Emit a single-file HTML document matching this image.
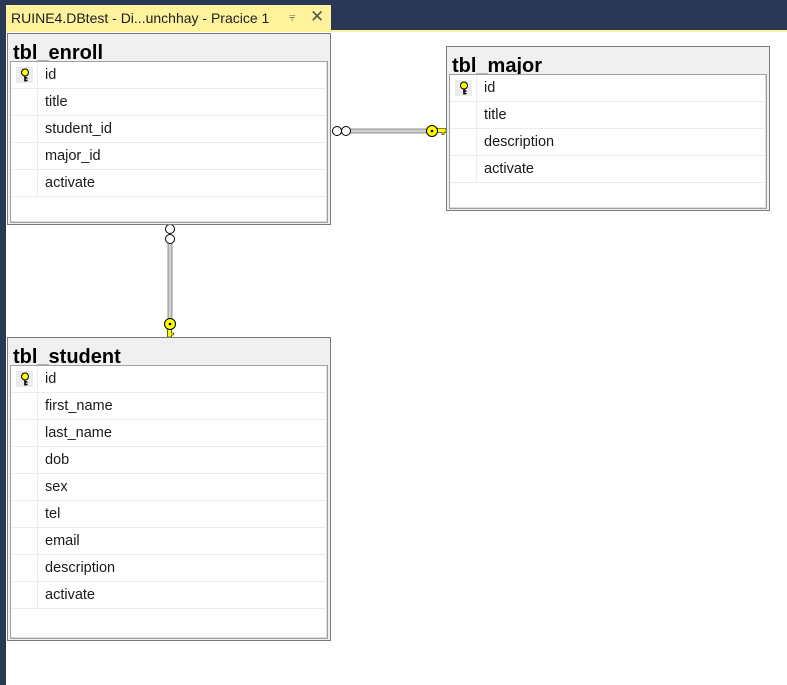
<!DOCTYPE html>
<html><head><meta charset="utf-8"><style>
*{margin:0;padding:0;box-sizing:border-box}
body{width:787px;height:685px;position:relative;background:#fff;overflow:hidden;font-family:"Segoe UI","Liberation Sans","DejaVu Sans",sans-serif}
.top{position:absolute;left:0;top:0;width:787px;height:30px;background:#293955}
.yl{position:absolute;left:0;top:30px;width:787px;height:2px;background:#fdf1a6}
.left{position:absolute;left:0;top:0;width:6px;height:685px;background:#293955}
.tab{position:absolute;left:6px;top:5px;width:325px;height:27px;background:#fff29d;font-size:14px;color:#1e1e1e;padding:5px 0 0 5px;white-space:nowrap}
.tab .pin{position:absolute;left:283px;top:5px;font-size:12px;color:#555}
.tab .x{position:absolute;left:304px;top:2px;font-size:17px;color:#555}
.tbl{position:absolute;border:1px solid #7a7a7a;background:#f0f0f0;overflow:hidden}
.tbl h1{position:absolute;left:5px;top:7px;font-size:20px;font-weight:bold;color:#000;line-height:24px;white-space:nowrap;z-index:0}
.in{position:absolute;left:2px;border:1px solid #a0a0a0;background:#fff;box-shadow:inset -1px -1px 0 #ddd;z-index:1}
.row{height:27px;border-bottom:1px solid #ececec;position:relative;font-size:14.5px;color:#1a1a1a;line-height:27px;padding-left:34px}
.row:before{content:"";position:absolute;left:26px;top:0;bottom:0;border-left:1px solid #ececec}
.k{position:absolute;left:5px;top:5px;width:17px;height:16px;background:#ececec}
</style></head><body>
<div class="top"></div><div class="yl"></div><div class="left"></div>
<div class="tab">RUINE4.DBtest - Di...unchhay - Pracice 1<span class="pin">&#x2AE7;</span><span class="x">✕</span></div>

<svg width="787" height="685" style="position:absolute;left:0;top:0" xmlns="http://www.w3.org/2000/svg">
<rect x="350" y="129" width="80" height="4" fill="#d0d0d0" stroke="#777" stroke-width="0.8"/>
<circle cx="337" cy="131" r="4.5" fill="#fff" stroke="#000"/>
<circle cx="346" cy="131" r="4.5" fill="#fff" stroke="#000"/>
<path d="M436 128.5h10v4h-2v2h-2v-2h-6z" fill="#ffff00" stroke="#000" stroke-width="0.6"/>
<circle cx="432" cy="131" r="5.5" fill="#ffff00" stroke="#000"/><circle cx="432" cy="131" r="1.3" fill="#000"/>
<rect x="168" y="243" width="4" height="78" fill="#d0d0d0" stroke="#777" stroke-width="0.8"/>
<circle cx="170" cy="229" r="4.5" fill="#fff" stroke="#000"/>
<circle cx="170" cy="239" r="4.5" fill="#fff" stroke="#000"/>
<path d="M167.5 327v10h4v-2h2v-2h-2v-6z" fill="#ffff00" stroke="#000" stroke-width="0.6"/>
<circle cx="170" cy="324" r="5.5" fill="#ffff00" stroke="#000"/><circle cx="170" cy="324" r="1.3" fill="#000"/>
</svg>

<div class="tbl" style="left:7px;top:33px;width:324px;height:192px">
<h1>tbl_enroll</h1>
<div class="in" style="top:27px;width:318px;height:162px">
<div class="row"><span class="k"></span><svg style="position:absolute;left:9px;top:6px" width="10" height="14"><circle cx="5" cy="4.5" r="3.5" fill="#ffff00" stroke="#000"/><path d="M5 8v5.5M5 10h2.5M5 12.5h2.5" stroke="#000" stroke-width="1.6"/></svg>id</div>
<div class="row">title</div><div class="row">student_id</div><div class="row">major_id</div><div class="row">activate</div>
</div></div>

<div class="tbl" style="left:446px;top:46px;width:324px;height:165px">
<h1>tbl_major</h1>
<div class="in" style="top:27px;width:318px;height:135px">
<div class="row"><span class="k"></span><svg style="position:absolute;left:9px;top:6px" width="10" height="14"><circle cx="5" cy="4.5" r="3.5" fill="#ffff00" stroke="#000"/><path d="M5 8v5.5M5 10h2.5M5 12.5h2.5" stroke="#000" stroke-width="1.6"/></svg>id</div>
<div class="row">title</div><div class="row">description</div><div class="row">activate</div>
</div></div>

<div class="tbl" style="left:7px;top:337px;width:324px;height:304px">
<h1>tbl_student</h1>
<div class="in" style="top:27px;width:318px;height:274px">
<div class="row"><span class="k"></span><svg style="position:absolute;left:9px;top:6px" width="10" height="14"><circle cx="5" cy="4.5" r="3.5" fill="#ffff00" stroke="#000"/><path d="M5 8v5.5M5 10h2.5M5 12.5h2.5" stroke="#000" stroke-width="1.6"/></svg>id</div>
<div class="row">first_name</div><div class="row">last_name</div><div class="row">dob</div><div class="row">sex</div><div class="row">tel</div><div class="row">email</div><div class="row">description</div><div class="row">activate</div>
</div></div>
</body></html>
